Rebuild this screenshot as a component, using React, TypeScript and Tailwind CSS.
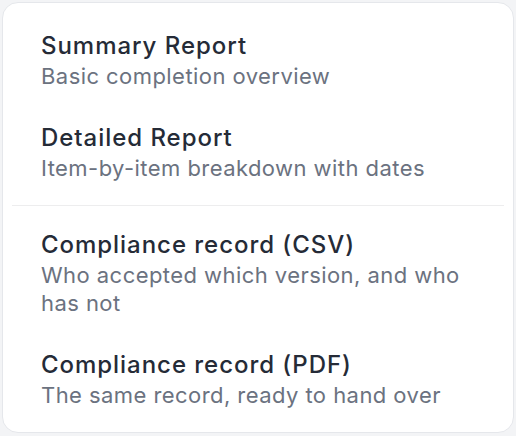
import React from 'react';

interface ReportOption {
  title: string;
  description: string;
}

const reports: ReportOption[] = [
  { title: 'Summary Report', description: 'Basic completion overview' },
  { title: 'Detailed Report', description: 'Item-by-item breakdown with dates' },
];

const records: ReportOption[] = [
  { title: 'Compliance record (CSV)', description: 'Who accepted which version, and who has not' },
  { title: 'Compliance record (PDF)', description: 'The same record, ready to hand over' },
];

const OptionItem: React.FC<{ option: ReportOption }> = ({ option }) => (
  <button
    type="button"
    className="block w-full text-left rounded-lg pl-[29px] pr-[20px] py-4 hover:bg-gray-50"
  >
    <div className="text-[24px] leading-[32px] tracking-[0.04em] font-medium text-[#252b37]">
      {option.title}
    </div>
    <div className="text-[22px] leading-[28px] tracking-[0.02em] text-[#6b7280]">
      {option.description}
    </div>
  </button>
);

const App: React.FC = () => {
  return (
    <div
      className="w-[516px] h-[436px] overflow-hidden bg-[#f3f4f6] pt-[2px] pl-[2px]"
      style={{ fontFamily: 'Inter, "Noto Sans", sans-serif' }}
    >
      <div className="w-[512px] h-[431px] bg-white border border-[#e5e7eb] rounded-2xl px-[9px] pt-[11px] pb-[7px]">
        {reports.map((r) => (
          <OptionItem key={r.title} option={r} />
        ))}
        <div className="my-[7px] h-px bg-[#ededee]" />
        {records.map((r) => (
          <OptionItem key={r.title} option={r} />
        ))}
      </div>
    </div>
  );
};

export default App;
